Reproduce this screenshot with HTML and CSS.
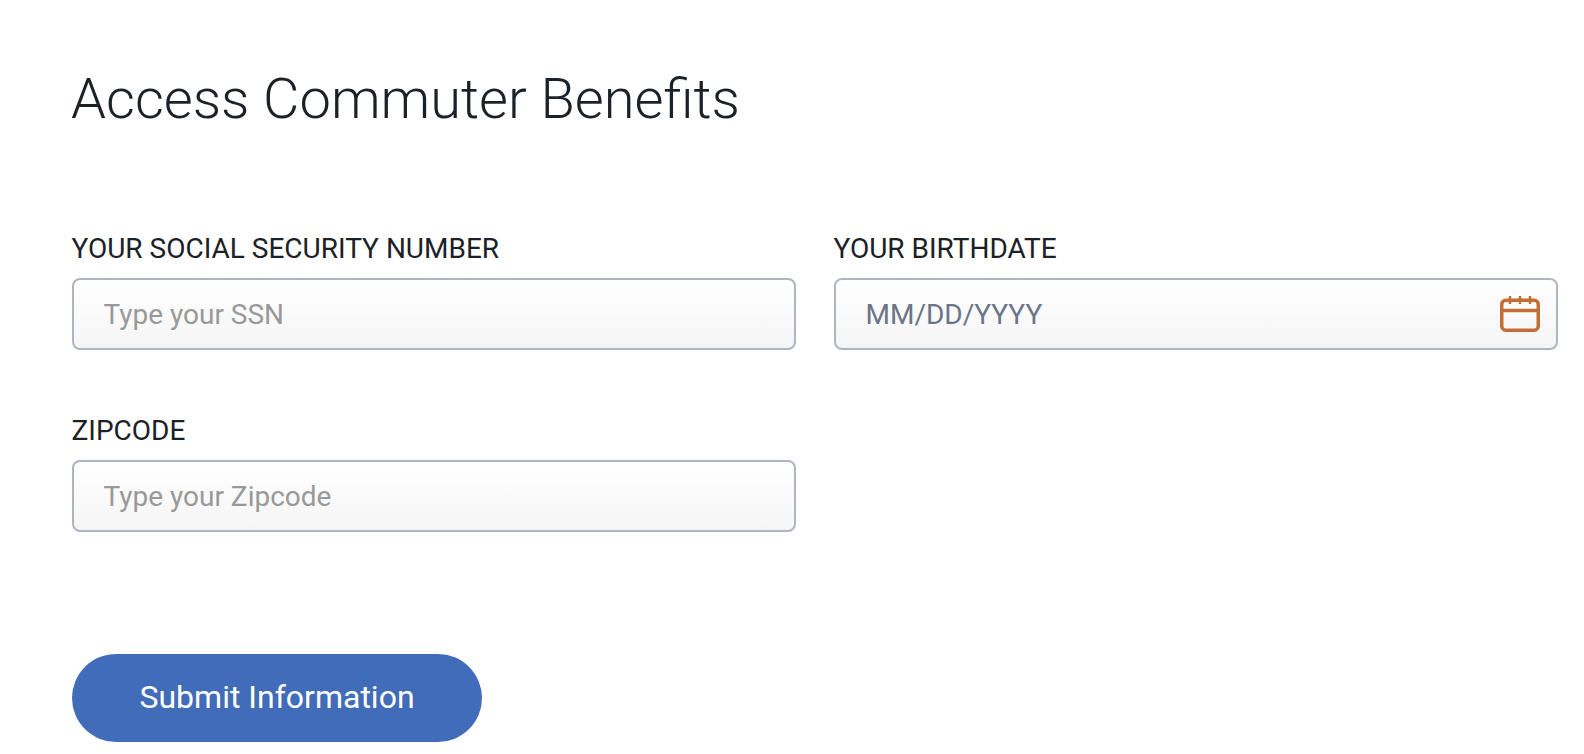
FILE: index.html
```html
<!DOCTYPE html>
<html lang="en">
<head>
	<meta charset="UTF-8">
	<title>Access Commuter Benefits</title>
	<link rel="stylesheet" href="styles.css">
</head>
<body>
	<h1 class="title">Access Commuter Benefits</h1>
	<form class="form">
		<div class="field">
			<label class="label" for="ssn">YOUR SOCIAL SECURITY NUMBER</label>
			<input class="input" id="ssn" type="text" placeholder="Type your SSN">
		</div>
		<div class="field">
			<label class="label" for="birthdate">YOUR BIRTHDATE</label>
			<div class="dateWrap">
				<input class="input date" id="birthdate" type="text" placeholder="MM/DD/YYYY">
				<svg class="calendar" viewBox="0 0 40 36" width="40" height="36" fill="none" stroke="#c26f35" stroke-width="3.500">
					<rect x="1.750" y="4.250" width="36.500" height="30" rx="4"/>
					<path d="M1.750 14.500H38.250"/>
					<path d="M10 0V8M20 0V8M30 0V8" stroke-width="2.500"/>
				</svg>
			</div>
		</div>
		<div class="field">
			<label class="label" for="zip">ZIPCODE</label>
			<input class="input" id="zip" type="text" placeholder="Type your Zipcode">
		</div>
	</form>
	<button class="submit" type="button">Submit Information</button>
</body>
</html>
```

FILE: styles.css
```css
*{
	box-sizing: border-box;
}
html,body{
	height: 100%;
}
body{
	margin: 0;
	padding: 0 26px 0 72px;
	background-color: #fff;
	font-family: Roboto, "Liberation Sans", sans-serif;
	color: #1b2127;
	overflow: hidden;
}
.title{
	margin: 0 0 0 -1px;
	padding-top: 66px;
	font-size: 56px;
	line-height: 66px;
	font-weight: 300;
}
.form{
	display: grid;
	grid-template-columns: 724px 724px;
	column-gap: 38px;
	row-gap: 64px;
	margin-top: 100px;
}
.field{
	display: flex;
	flex-direction: column;
}
.label{
	font-size: 28px;
	line-height: 33px;
	margin: 0 0 13px -0.5px;
}
.input{
	display: block;
	width: 100%;
	height: 72px;
	padding: 0 29.500px;
	border: 2px solid #aeb4c4;
	border-radius: 8px;
	background: linear-gradient(#fff, #f5f5f5);
	font-family: inherit;
	font-size: 28px;
	outline: none;
}
.input::placeholder{
	color: #999;
	opacity: 1;
}
.date::placeholder{
	color: #6a7587;
}
.dateWrap{
	position: relative;
}
.calendar{
	position: absolute;
	right: 18px;
	top: 18px;
}
.submit{
	display: block;
	width: 410px;
	height: 88px;
	margin-top: 122px;
	padding: 0 0 3px;
	border: 0;
	border-radius: 44px;
	background-color: #416cb9;
	color: #fff;
	font-family: inherit;
	font-size: 32px;
}
```
